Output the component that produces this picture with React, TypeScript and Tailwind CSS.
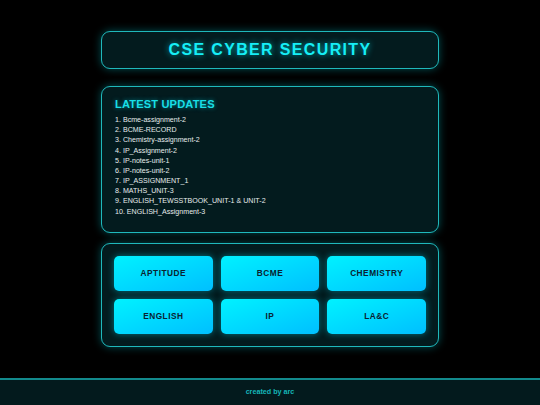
import React from 'react'

const updates = [
  'Bcme-assignment-2',
  'BCME-RECORD',
  'Chemistry-assignment-2',
  'IP_Assignment-2',
  'IP-notes-unit-1',
  'IP-notes-unit-2',
  'IP_ASSIGNMENT_1',
  'MATHS_UNIT-3',
  'ENGLISH_TEWSSTBOOK_UNIT-1 & UNIT-2',
  'ENGLISH_Assignment-3',
]

const subjects = ['APTITUDE', 'BCME', 'CHEMISTRY', 'ENGLISH', 'IP', 'LA&C']

const panel =
  'w-[338px] rounded-[9px] border border-[#1fb8bb] bg-[#031b1e] shadow-[0_0_8px_rgba(0,230,240,0.35)]'

export default function App() {
  return (
    <div className="flex h-[405px] w-[540px] flex-col bg-black font-['Liberation_Sans',Arial,sans-serif]">
      <main className="flex flex-1 flex-col items-center pt-[31px]">
        {/* header */}
        <div className={`${panel} flex h-[38px] items-center justify-center`}>
          <h1 className="text-[16px] font-bold leading-none tracking-[1.35px] text-[#16eef6] [text-shadow:0_0_6px_rgba(0,240,255,0.7)]">
            CSE CYBER SECURITY
          </h1>
        </div>

        {/* latest updates */}
        <div className={`${panel} mt-[17px] h-[147px] px-[13px] pt-[12px]`}>
          <h2 className="text-[11.1px] font-bold leading-none tracking-[0.15px] text-[#19dfe6] [text-shadow:0_0_4px_rgba(0,240,255,0.5)]">
            LATEST UPDATES
          </h2>
          <ol className="mt-[5px] text-[7.1px] leading-[10.15px] text-[#e6ecec]">
            {updates.map((u, i) => (
              <li key={u}>
                {i + 1}. {u}
              </li>
            ))}
          </ol>
        </div>

        {/* subjects */}
        <div className={`${panel} mt-[10px] grid h-[104px] grid-cols-3 gap-x-[8px] gap-y-[8px] p-[12px]`}>
          {subjects.map((s) => (
            <button
              key={s}
              type="button"
              className="flex h-[35px] items-center justify-center rounded-[5px] bg-linear-to-br from-[#00f2ff] to-[#00bfff] text-[8.3px] font-bold tracking-[0.5px] text-[#0b2230] shadow-[0_0_7px_rgba(0,230,255,0.45)]"
            >
              {s}
            </button>
          ))}
        </div>
      </main>

      <footer className="flex h-[27px] items-center justify-center border-t-2 border-[#128a8c] bg-[#031a1d]">
        <span className="text-[7.2px] font-bold text-[#15b6b8]">created by arc</span>
      </footer>
    </div>
  )
}
